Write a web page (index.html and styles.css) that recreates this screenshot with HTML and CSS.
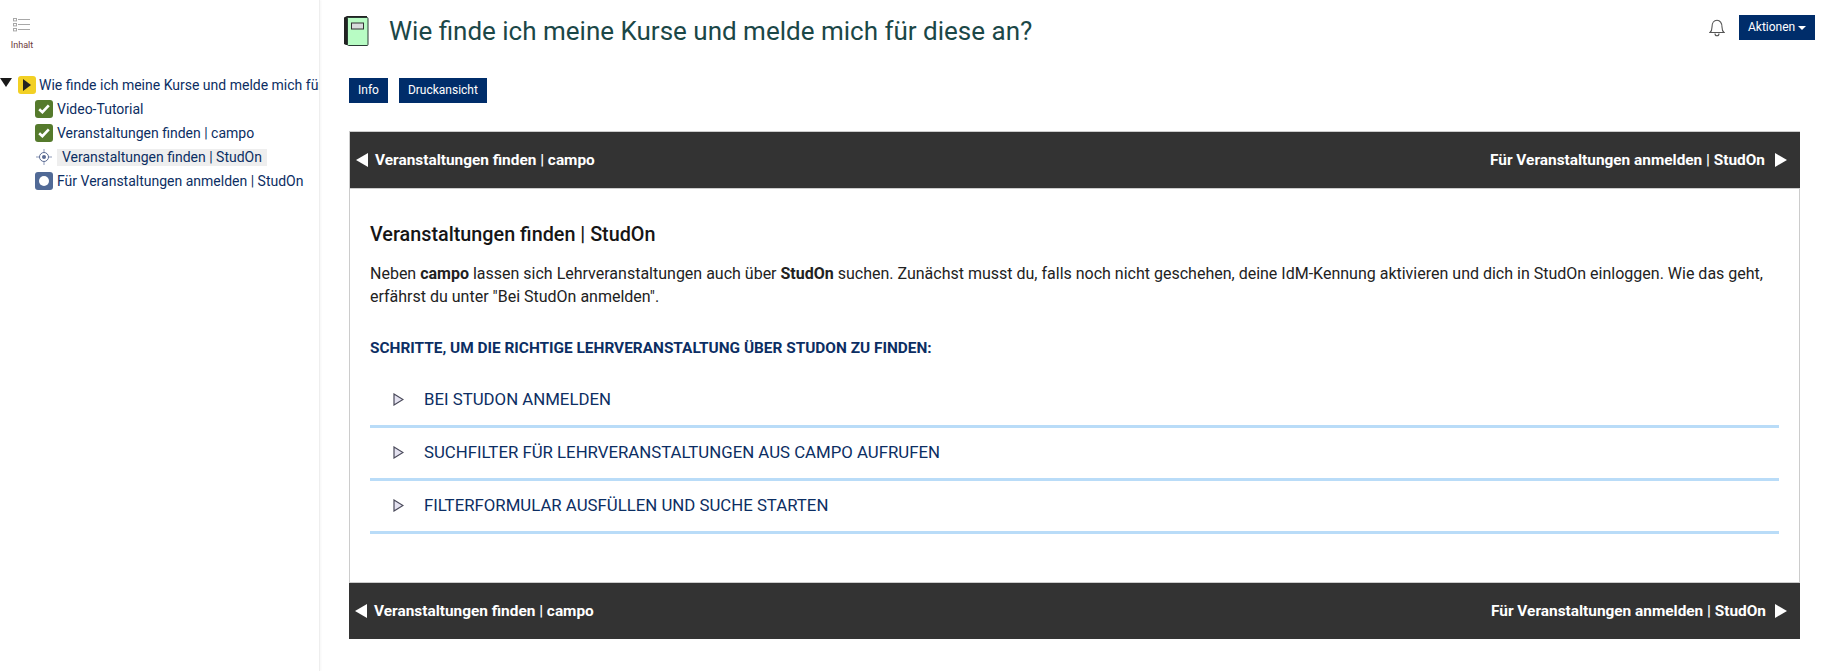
FILE: index.html
```html
<!DOCTYPE html>
<html lang="de">
<head>
<meta charset="utf-8">
<title>Wie finde ich meine Kurse und melde mich für diese an?</title>
<link rel="stylesheet" href="styles.css">
</head>
<body>
<div class="app">
  <aside class="side">
    <div class="tab">
      <svg class="tab-icon" width="18" height="14" viewBox="0 0 18 14"><g fill="none" stroke="#a8a8a8"><rect x="0.5" y="0.5" width="3" height="2.4"/><rect x="0.5" y="5.5" width="3" height="2.4"/><rect x="0.5" y="10.5" width="3" height="2.4"/><path d="M5 1.5h12M5 6.5h12M5 11.5h12"/></g></svg>
      <span class="tab-label">Inhalt</span>
    </div>
    <ul class="tree">
      <li class="node root">
        <svg class="caret" width="12" height="10" viewBox="0 0 12 10"><path d="M0 0h12L6 9z" fill="#1a1a1a"/></svg>
        <span class="ico ico-y"><svg width="8" height="12" viewBox="0 0 8 12"><path d="M0 0l8 6-8 6z" fill="#222"/></svg></span>
        <span class="label">Wie finde ich meine Kurse und melde mich für diese an?</span>
      </li>
      <li class="node child">
        <span class="ico ico-g"><svg width="12" height="10" viewBox="0 0 12 10"><path d="M1.2 5.2l3.2 3L10.8 1.4" fill="none" stroke="#fff" stroke-width="2.6"/></svg></span>
        <span class="label">Video-Tutorial</span>
      </li>
      <li class="node child">
        <span class="ico ico-g"><svg width="12" height="10" viewBox="0 0 12 10"><path d="M1.2 5.2l3.2 3L10.8 1.4" fill="none" stroke="#fff" stroke-width="2.6"/></svg></span>
        <span class="label">Veranstaltungen finden | campo</span>
      </li>
      <li class="node child">
        <span class="ico ico-t"><svg width="18" height="18" viewBox="0 0 18 18"><g fill="none" stroke="#5a6a92"><circle cx="9" cy="9" r="4.5"/><path d="M9 1v3M9 14v3M1 9h3M14 9h3" stroke="#b4bccf" stroke-width="1.5"/></g><circle cx="9" cy="9" r="2" fill="#5a6a92"/></svg></span>
        <span class="label current">Veranstaltungen finden | StudOn</span>
      </li>
      <li class="node child">
        <span class="ico ico-b"><span class="dot"></span></span>
        <span class="label">Für Veranstaltungen anmelden | StudOn</span>
      </li>
    </ul>
  </aside>
  <main class="main">
    <header class="head">
      <svg class="book" width="26" height="32" viewBox="0 0 26 32"><path d="M1 2.5L4 1h20v2H5v27H3L1 29z" fill="#222"/><rect x="4.5" y="2.5" width="20.5" height="28" rx="1" fill="#b8fcc4" stroke="#2a3a34"/><rect x="8.5" y="8" width="12" height="6" fill="#d8dcdc" stroke="#333"/></svg>
      <h1 class="title">Wie finde ich meine Kurse und melde mich für diese an?</h1>
      <div class="head-right">
        <svg class="bell" width="16" height="18" viewBox="0 0 16 18"><path d="M1 13.5c1.6-1.2 2-2.4 2-5.500C3 4.200 5 1.200 8 1.200s5 3 5 6.800c0 3.100.4 4.300 2 5.500z" fill="none" stroke="#555" stroke-width="1.100"/><path d="M6 14.500c0 1.500 1 2.300 2 2.300s2-.8 2-2.300" fill="none" stroke="#555" stroke-width="1.100"/></svg>
        <a class="btn btn-actions">Aktionen <span class="down"></span></a>
      </div>
    </header>
    <nav class="tools">
      <a class="btn">Info</a>
      <a class="btn">Druckansicht</a>
    </nav>
    <section class="page">
      <div class="pager">
        <a class="pg"><span class="tri-l"></span>Veranstaltungen finden | campo</a>
        <a class="pg">Für Veranstaltungen anmelden | StudOn<span class="tri-r"></span></a>
      </div>
      <div class="body">
        <h2 class="sub">Veranstaltungen finden | StudOn</h2>
        <p class="text">Neben <b>campo</b> lassen sich Lehrveranstaltungen auch über <b>StudOn</b> suchen. Zunächst musst du, falls noch nicht geschehen, deine IdM-Kennung aktivieren und dich in StudOn einloggen. Wie das geht, erfährst du unter "Bei StudOn anmelden".</p>
        <h3 class="steps">SCHRITTE, UM DIE RICHTIGE LEHRVERANSTALTUNG ÜBER STUDON ZU FINDEN:</h3>
        <div class="acc"><svg class="acc-tri" width="11" height="13" viewBox="0 0 11 13"><path d="M1 1l9 5.500-9 5.500z" fill="#e4e2f0" stroke="#4a4a5a" stroke-width="1.200"/></svg>BEI STUDON ANMELDEN</div>
        <div class="acc"><svg class="acc-tri" width="11" height="13" viewBox="0 0 11 13"><path d="M1 1l9 5.500-9 5.500z" fill="#e4e2f0" stroke="#4a4a5a" stroke-width="1.200"/></svg>SUCHFILTER FÜR LEHRVERANSTALTUNGEN AUS CAMPO AUFRUFEN</div>
        <div class="acc"><svg class="acc-tri" width="11" height="13" viewBox="0 0 11 13"><path d="M1 1l9 5.500-9 5.500z" fill="#e4e2f0" stroke="#4a4a5a" stroke-width="1.200"/></svg>FILTERFORMULAR AUSFÜLLEN UND SUCHE STARTEN</div>
      </div>
      <div class="pager pager-bottom">
        <a class="pg"><span class="tri-l"></span>Veranstaltungen finden | campo</a>
        <a class="pg">Für Veranstaltungen anmelden | StudOn<span class="tri-r"></span></a>
      </div>
    </section>
  </main>
</div>
</body>
</html>
```

FILE: styles.css
```css
* { box-sizing: border-box; }
html, body { margin: 0; padding: 0; height: 100%; background: #fff; overflow: hidden; }
body { font-family: Roboto, "Liberation Sans", sans-serif; color: #161616; }
.app { display: flex; height: 671px; }

.side { width: 320px; flex: none; border-right: 1px solid #eee; box-shadow: 1px 0 2px rgba(0,0,0,.04); overflow: hidden; padding-top: 18px; }
.tab { width: 44px; display: flex; flex-direction: column; align-items: center; }
.tab-icon { display: block; }
.tab-label { font-size: 9px; line-height: 12px; margin-top: 7px; color: #6b3a3a; }
.tree { list-style: none; margin: 22px 0 0; padding: 0; }
.node { display: flex; align-items: center; height: 24px; font-size: 14px; color: #0c2e63; white-space: nowrap; }
.root { padding-left: 0; }
.child { padding-left: 35px; }
.caret { flex: none; margin-right: 6px; margin-bottom: 5px; }
.ico { flex: none; width: 18px; height: 18px; border-radius: 3px; display: flex; align-items: center; justify-content: center; margin-right: 4px; }
.root .ico { margin-right: 3px; }
.ico-y { background: #f2d024; }
.ico-g { background: #557a2c; }
.ico-b { background: #516a96; }
.ico-t { background: none; }
.dot { width: 10px; height: 10px; border-radius: 50%; background: #fff; }
.label { line-height: 17px; }
.current { background: #eee; padding: 0 5px; }

.main { flex: 1; min-width: 0; padding: 13px 22px 0 30px; }
.head { display: flex; align-items: center; height: 36px; margin-left: -7px; }
.book { flex: none; margin-right: 20px; }
.title { margin: 0; font-weight: 400; font-size: 26px; line-height: 36px; color: #1b4747; flex: 1; }
.head-right { display: flex; align-items: flex-start; align-self: flex-start; margin-right: -15px; margin-top: 2px; }
.bell { margin: 4px 14px 0 0; }
.btn { display: inline-block; background: #002d6a; color: #fff; font-size: 12px; font-weight: 400; line-height: 25px; height: 25px; padding: 0 9px; }
.btn-actions { width: 76px; white-space: nowrap; }
.down { display: inline-block; width: 0; height: 0; border-left: 4px solid transparent; border-right: 4px solid transparent; border-top: 4px solid #fff; vertical-align: middle; }

.tools { display: flex; gap: 11px; margin-top: 29px; height: 25px; margin-left: -1px; }

.page { margin-top: 28px; width: 1451px; margin-left: -1px; }
.pager { display: flex; justify-content: space-between; align-items: center; background: #333; height: 58px; border: 1px solid #ccc; border-width: 1px 0 1px 1px; padding: 0 13px 0 6px; }
.pager-bottom { height: 57px; border: 0; border-top: 1px solid #ccc; padding: 0 13px 0 6px; }
.pg { display: flex; align-items: center; color: #fff; font-size: 15.400px; font-weight: 700; }
.tri-l { width: 0; height: 0; border-top: 7px solid transparent; border-bottom: 7px solid transparent; border-right: 12px solid #fff; margin-right: 7px; }
.tri-r { width: 0; height: 0; border-top: 7px solid transparent; border-bottom: 7px solid transparent; border-left: 12px solid #fff; margin-left: 10px; }
.pager-bottom .tri-r { margin-left: 9px; }

.body { height: 393px; border-left: 1px solid #ccc; border-right: 1px solid #ccc; padding: 34px 20px 0 20px; }
.sub { margin: 0; font-size: 19.800px; line-height: 24px; font-weight: 500; color: #161616; }
.text { margin: 15px 0 0; font-size: 16px; line-height: 23px; font-weight: 400; color: #222; }
.text b { font-weight: 700; }
.steps { margin: 30px 0 17px; font-size: 15.400px; line-height: 20px; font-weight: 700; color: #0c2e63; }
.acc { display: flex; align-items: center; height: 53px; border-bottom: 3px solid #b9dcf8; padding: 0 0 2px 23px; font-size: 16.800px; color: #0c2e63; }
.acc-tri { margin-right: 20px; flex: none; }
```
